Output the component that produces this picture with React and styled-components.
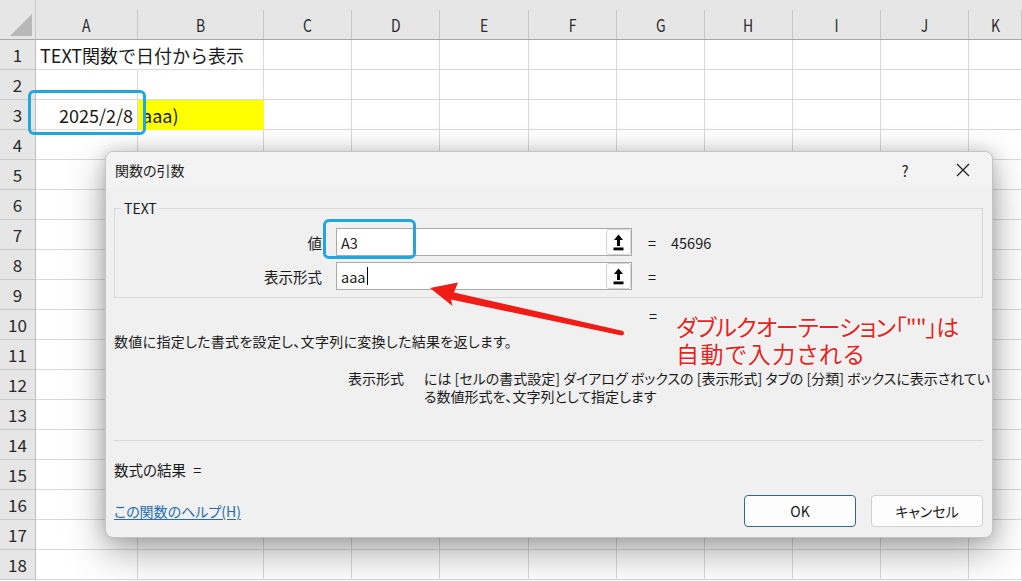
import React from "react";
import styled, { createGlobalStyle } from "styled-components";

const Global = createGlobalStyle`
  html, body { margin: 0; padding: 0; background: #fff; }
  body { font-family: "Noto Sans CJK JP", "Noto Sans", sans-serif; }
`;

const FONT = `"Noto Sans CJK JP", "Noto Sans", sans-serif`;

const Root = styled.div`
  position: relative;
  width: 1022px;
  height: 581px;
  overflow: hidden;
  background: #fff;
  font-family: ${FONT};
`;

const Sheet = styled.div`
  display: grid;
  grid-template-columns: 36px 102px 126px 88px 88px 89px 88px 88px 88px 88px 88px 53px;
  grid-template-rows: 40px;
  grid-auto-rows: 30px;
  background: #fff;
`;

const Corner = styled.div`
  position: relative;
  background: #e6e6e6;
  border-bottom: 1px solid #a8a8a8;
  border-right: 1px solid #c8c8c8;
  &::after {
    content: "";
    position: absolute;
    right: 3px;
    bottom: 3px;
    width: 0;
    height: 0;
    border-left: 22px solid transparent;
    border-bottom: 22px solid #b8b8b8;
  }
`;

const ColHead = styled.div`
  background: #e6e6e6;
  border-bottom: 1px solid #a8a8a8;
  display: flex;
  align-items: stretch;
`;

const ColHeadInner = styled.div`
  flex: 1;
  margin-top: 10px;
  border-right: 1px solid #c8c8c8;
  display: flex;
  align-items: center;
  justify-content: center;
  font-size: 17px;
  color: #2a2a2a;
`;

const ColLetter = styled.span`
  display: inline-block;
  transform: scaleX(0.82);
`;

const RowHead = styled.div`
  background: #e6e6e6;
  border-right: 1px solid #bcbcbc;
  border-bottom: 1px solid #c9c9c9;
  display: flex;
  align-items: center;
  justify-content: center;
  font-size: 17px;
  color: #2a2a2a;
`;

const Cell = styled.div`
  border-right: 1px solid ${(p) => (p.$fill ? p.$fill : p.$noRight ? "transparent" : "#d9d9d9")};
  border-bottom: 1px solid ${(p) => (p.$fill ? p.$fill : "#d9d9d9")};
  background: ${(p) => p.$fill || "transparent"};
  display: flex;
  align-items: center;
  justify-content: ${(p) => (p.$right ? "flex-end" : "flex-start")};
  padding: 0 ${(p) => (p.$right ? "4px" : "0")} 0 ${(p) => (p.$right ? "0" : "4px")};
  font-size: 18px;
  color: #1a1a1a;
  white-space: nowrap;
  overflow: visible;
  position: relative;
  z-index: ${(p) => (p.$over ? 1 : 0)};
`;

const Highlight = styled.div`
  position: absolute;
  border: 3px solid #22a6e2;
  border-radius: 6px;
  z-index: 5;
  pointer-events: none;
`;

/* ---------- Dialog ---------- */
const Dialog = styled.div`
  position: absolute;
  left: 105px;
  top: 151px;
  width: 888px;
  height: 387px;
  box-sizing: border-box;
  background: #f0f0f0;
  border: 1px solid #c4c4c4;
  border-radius: 8px;
  box-shadow: 0 14px 38px rgba(0, 0, 0, 0.34), 0 0 16px rgba(0, 0, 0, 0.16);
  display: flex;
  flex-direction: column;
  font-family: ${FONT};
  font-feature-settings: "palt";
  color: #1a1a1a;
  z-index: 3;
`;

const TitleBar = styled.div`
  height: 36px;
  display: flex;
  align-items: center;
  background: #f3f3f3;
  border-radius: 8px 8px 0 0;
  padding-left: 9px;
  font-size: 14px;
`;

const Title = styled.div`
  flex: 1;
`;

const TitleButton = styled.div`
  width: 58px;
  height: 36px;
  display: flex;
  align-items: center;
  justify-content: center;
  font-size: 15px;
  color: #222;
`;

const Body = styled.div`
  flex: 1;
  display: flex;
  flex-direction: column;
  align-items: stretch;
  padding: 0 9px 0 8px;
`;

const Group = styled.div`
  position: relative;
  margin-top: 20px;
  height: 90px;
  box-sizing: border-box;
  border: 1px solid #d9d9d9;
  padding-top: 19px;
  display: grid;
  grid-template-columns: 207px 296px 10px auto;
  column-gap: 14px;
  row-gap: 6px;
  grid-auto-rows: 28px;
  align-items: center;
`;

const Legend = styled.div`
  position: absolute;
  left: 7px;
  top: -10px;
  padding: 0 2px;
  background: #f0f0f0;
  font-size: 14px;
  line-height: 18px;
`;

const Label = styled.div`
  text-align: right;
  font-size: 14.5px;
`;

const Input = styled.div`
  height: 28px;
  box-sizing: border-box;
  border: 1px solid #a9a9a9;
  background: #fff;
  display: flex;
  align-items: center;
`;

const InputText = styled.div`
  flex: 1;
  padding-left: 4px;
  font-size: 14.5px;
  display: flex;
  align-items: center;
`;

const Caret = styled.span`
  display: inline-block;
  width: 1px;
  height: 18px;
  background: #000;
  margin-left: 1px;
`;

const RefButton = styled.div`
  width: 25px;
  height: 26px;
  box-sizing: border-box;
  border: 1px solid #d4d4d4;
  border-radius: 3px;
  background: #fdfdfd;
  display: flex;
  align-items: center;
  justify-content: center;
`;

const Eq = styled.div`
  font-size: 14.5px;
  text-align: center;
  margin-left: 2px;
`;

const Value = styled.div`
  font-size: 14.5px;
  margin-left: 1px;
`;

const ResultEq = styled.div`
  align-self: flex-start;
  height: 20px;
  margin-top: 8px;
  margin-left: 535px;
  font-size: 14.5px;
  line-height: 20px;
`;

const Desc = styled.div`
  align-self: flex-start;
  height: 20px;
  margin-top: 5px;
  font-size: 14px;
  letter-spacing: 0.3px;
  line-height: 20px;
  white-space: nowrap;
`;

const ParamDesc = styled.div`
  align-self: flex-start;
  margin-top: 18px;
  margin-left: 234px;
  display: flex;
  gap: 16px;
  font-size: 14px;
  line-height: 18px;
  white-space: nowrap;
`;

const ParamName = styled.div`
  width: 60px;
`;

const Separator = styled.div`
  margin-top: 35px;
  height: 1px;
  background: #d9d9d9;
`;

const Result = styled.div`
  margin-top: 19px;
  height: 20px;
  font-size: 14.5px;
  line-height: 20px;
  word-spacing: 4px;
`;

const Footer = styled.div`
  margin-top: 15px;
  display: flex;
  align-items: center;
  gap: 15px;
`;

const HelpLink = styled.a`
  flex: 1;
  color: #1f6db4;
  text-decoration: underline;
  text-underline-offset: 2px;
  font-size: 14px;
`;

const Button = styled.div`
  width: 112px;
  height: 32px;
  box-sizing: border-box;
  border: 1px solid ${(p) => (p.$primary ? "#2c6b90" : "#d0d0d0")};
  border-radius: 4px;
  background: #fdfdfd;
  display: flex;
  align-items: center;
  justify-content: center;
  font-size: 14px;
  color: #1a1a1a;
`;

const Annotation = styled.div`
  position: absolute;
  left: 676px;
  top: 313px;
  font-family: ${FONT};
  font-size: 23px;
  line-height: 27px;
  color: #e8241d;
  font-feature-settings: "palt";
  text-shadow: 0 0 3px #fff, 0 0 2px #fff;
  white-space: nowrap;
  z-index: 6;
`;

const AnnLine = styled.div`
  letter-spacing: ${(p) => p.$ls || "0px"};
`;

const Overlay = styled.svg`
  position: absolute;
  left: 0;
  top: 0;
  z-index: 6;
  pointer-events: none;
`;

const COLS = ["A", "B", "C", "D", "E", "F", "G", "H", "I", "J", "K"];
const ROWS = Array.from({ length: 18 }, (_, i) => i + 1);

function cellProps(r, c) {
  if (r === 1 && c === "A") return { $noRight: true, $over: true, children: "TEXT関数で日付から表示" };
  if (r === 3 && c === "A") return { $right: true, children: "2025/2/8" };
  if (r === 3 && c === "B") return { $fill: "#ffff00", children: "aaa)" };
  return {};
}

const RefIcon = () => (
  <svg width="11" height="17" viewBox="0 0 11 17">
    <path d="M5.5 0.5 L10 6 H7 V12 H4 V6 H1 Z" fill="#000" />
    <rect x="0.5" y="13.5" width="10" height="2.8" fill="#000" />
  </svg>
);

const CloseIcon = () => (
  <svg width="14" height="14" viewBox="0 0 14 14">
    <path d="M1 1 L13 13 M13 1 L1 13" stroke="#222" strokeWidth="1.3" fill="none" />
  </svg>
);

export default function App() {
  return (
    <Root>
      <Global />
      <Sheet>
        <Corner />
        {COLS.map((c) => (
          <ColHead key={c}>
            <ColHeadInner>
              <ColLetter>{c}</ColLetter>
            </ColHeadInner>
          </ColHead>
        ))}
        {ROWS.map((r) => (
          <React.Fragment key={r}>
            <RowHead>{r}</RowHead>
            {COLS.map((c) => (
              <Cell key={c} {...cellProps(r, c)} />
            ))}
          </React.Fragment>
        ))}
      </Sheet>

      <Highlight style={{ left: 28, top: 90, width: 112, height: 39 }} />

      <Dialog>
        <TitleBar>
          <Title>関数の引数</Title>
          <TitleButton>?</TitleButton>
          <TitleButton>
            <CloseIcon />
          </TitleButton>
        </TitleBar>
        <Body>
          <Group>
            <Legend>TEXT</Legend>
            <Label>値</Label>
            <Input>
              <InputText>A3</InputText>
              <RefButton>
                <RefIcon />
              </RefButton>
            </Input>
            <Eq>=</Eq>
            <Value>45696</Value>
            <Label>表示形式</Label>
            <Input>
              <InputText>
                aaa
                <Caret />
              </InputText>
              <RefButton>
                <RefIcon />
              </RefButton>
            </Input>
            <Eq>=</Eq>
            <Value />
          </Group>
          <ResultEq>=</ResultEq>
          <Desc>数値に指定した書式を設定し、文字列に変換した結果を返します。</Desc>
          <ParamDesc>
            <ParamName>表示形式</ParamName>
            <div>
              には [セルの書式設定] ダイアログ ボックスの [表示形式] タブの [分類] ボックスに表示されてい
              <br />
              る数値形式を、文字列として指定します
            </div>
          </ParamDesc>
          <Separator />
          <Result>数式の結果 =</Result>
          <Footer>
            <HelpLink>この関数のヘルプ(H)</HelpLink>
            <Button $primary>OK</Button>
            <Button>キャンセル</Button>
          </Footer>
        </Body>
      </Dialog>

      <Highlight style={{ left: 323, top: 219, width: 87, height: 34 }} />

      <Overlay width="1022" height="581" viewBox="0 0 1022 581">
        <path
          d="M430 288 L458 282.5 L454 292.5 L623 331 L624.5 334 L621.5 335.5 L451 299.5 L452.5 306 Z"
          fill="#f01c16"
        />
      </Overlay>

      <Annotation>
        <AnnLine $ls="-0.9px">ダブルクオーテーション「""」は</AnnLine>
        <AnnLine $ls="1.5px">自動で入力される</AnnLine>
      </Annotation>
    </Root>
  );
}
